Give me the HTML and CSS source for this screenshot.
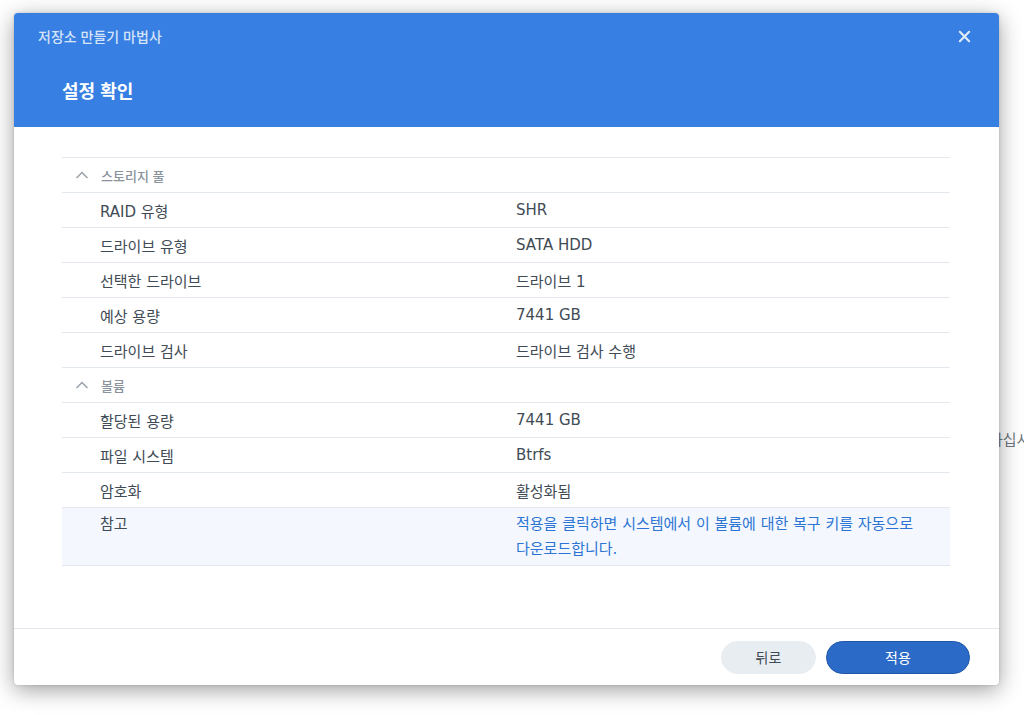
FILE: index.html
```html
<!DOCTYPE html>
<html lang="ko">
  <head>
    <meta charset="UTF-8" />
    <meta name="viewport" content="width=device-width, initial-scale=1.0" />
    <title>저장소 만들기 마법사</title>
    <link rel="stylesheet" href="styles.css">
  </head>
  <body>
    <!-- page behind the modal -->
    <div class="backdrop-text">하십시오</div>

    <div class="dialog">
      <header class="dialog-head">
        <div class="head-top">
          <span class="wizard-name">저장소 만들기 마법사</span>
          <button class="close-btn" aria-label="닫기">
            <svg width="13" height="13" viewBox="0 0 14 14">
              <path d="M2 2 L12 12 M12 2 L2 12" stroke="currentColor" stroke-width="2.3" stroke-linecap="round" />
            </svg>
          </button>
        </div>
        <h1>설정 확인</h1>
      </header>

      <div class="dialog-body">
        <div class="summary">
          <div class="group-row">
            <svg class="chevron" width="14" height="8" viewBox="0 0 14 8">
              <path d="M1.5 7 L7 1.5 L12.5 7" fill="none" stroke="currentColor" stroke-width="1.5" />
            </svg>
            <span>스토리지 풀</span>
          </div>
          <div class="row"><span class="key">RAID 유형</span><span class="val">SHR</span></div>
          <div class="row"><span class="key">드라이브 유형</span><span class="val">SATA HDD</span></div>
          <div class="row"><span class="key">선택한 드라이브</span><span class="val">드라이브 1</span></div>
          <div class="row"><span class="key">예상 용량</span><span class="val">7441 GB</span></div>
          <div class="row"><span class="key">드라이브 검사</span><span class="val">드라이브 검사 수행</span></div>

          <div class="group-row">
            <svg class="chevron" width="14" height="8" viewBox="0 0 14 8">
              <path d="M1.5 7 L7 1.5 L12.5 7" fill="none" stroke="currentColor" stroke-width="1.5" />
            </svg>
            <span>볼륨</span>
          </div>
          <div class="row"><span class="key">할당된 용량</span><span class="val">7441 GB</span></div>
          <div class="row"><span class="key">파일 시스템</span><span class="val">Btrfs</span></div>
          <div class="row"><span class="key">암호화</span><span class="val">활성화됨</span></div>
          <div class="row note">
            <span class="key">참고</span>
            <span class="val">적용을 클릭하면 시스템에서 이 볼륨에 대한 복구 키를 자동으로<br>다운로드합니다.</span>
          </div>
        </div>
      </div>

      <footer class="dialog-foot">
        <button class="btn btn-back">뒤로</button>
        <button class="btn btn-apply">적용</button>
      </footer>
    </div>
  </body>
</html>
```

FILE: styles.css
```css
* {
  box-sizing: border-box;
}
body {
  margin: 0;
  width: 1024px;
  height: 715px;
  overflow: hidden;
  background: #fff;
  font-family: "DejaVu Sans", "Noto Sans CJK KR", sans-serif;
  color: #414b55;
  position: relative;
  padding: 13px 0 0 14px;
}
.backdrop-text {
  position: absolute;
  left: 989px;
  top: 428px;
  font-family: "Noto Sans CJK KR", sans-serif;
  font-size: 15px;
  color: #6f7780;
  white-space: nowrap;
}
.dialog {
  position: relative;
  width: 985px;
  height: 672px;
  background: #fff;
  border-radius: 4px;
  box-shadow: 0 5px 22px rgba(0, 0, 0, 0.38), 0 0 3px rgba(0, 0, 0, 0.15);
  display: flex;
  flex-direction: column;
  overflow: hidden;
}
.dialog-head {
  height: 114px;
  background: #377fe2;
  color: #fff;
  flex-shrink: 0;
  font-family: "Noto Sans CJK KR", sans-serif;
}
.head-top {
  height: 46px;
  display: flex;
  align-items: center;
  justify-content: space-between;
  padding: 0 28px 0 24px;
}
.wizard-name {
  font-size: 14px;
  font-weight: 500;
  color: rgba(255, 255, 255, 0.8);
}
.close-btn {
  background: none;
  border: 0;
  padding: 0;
  color: rgba(255, 255, 255, 0.85);
  display: flex;
  cursor: pointer;
}
.dialog-head h1 {
  margin: 0;
  padding: 0 0 0 48px;
  font-size: 18px;
  font-weight: 700;
  line-height: 62px;
}
.dialog-body {
  flex: 1;
  padding: 30px 49px 0 48px;
}
.summary {
  border-bottom: 1px solid #e3e8ee;
}
.group-row,
.row {
  display: flex;
  align-items: center;
  height: 35px;
  border-top: 1px solid #e3e8ee;
}
.group-row {
  font-family: "Noto Sans CJK KR", sans-serif;
  font-size: 13px;
  font-weight: 500;
  color: #8a929b;
  padding-left: 13px;
}
.chevron {
  color: #9aa1a9;
  margin-right: 12px;
}
.row {
  font-size: 15px;
}
.row .key {
  width: 454px;
  padding-left: 38px;
  flex-shrink: 0;
}
.row.note {
  height: 58px;
  align-items: flex-start;
  padding-top: 4px;
  line-height: 25px;
  background: #f4f8fe;
}
.row.note .val {
  color: #2c75d4;
}
.dialog-foot {
  height: 57px;
  border-top: 1px solid #e3e8ee;
  display: flex;
  align-items: center;
  justify-content: flex-end;
  gap: 10px;
  padding-right: 29px;
  flex-shrink: 0;
}
.btn {
  height: 33px;
  border-radius: 17px;
  font-family: "Noto Sans CJK KR", sans-serif;
  font-size: 14px;
  cursor: pointer;
}
.btn-back {
  width: 95px;
  background: #e8edf2;
  border: 1px solid #e8edf2;
  color: #414b55;
}
.btn-apply {
  width: 144px;
  background: #2c6ac8;
  border: 1px solid #1f56a8;
  color: #fff;
}
```
